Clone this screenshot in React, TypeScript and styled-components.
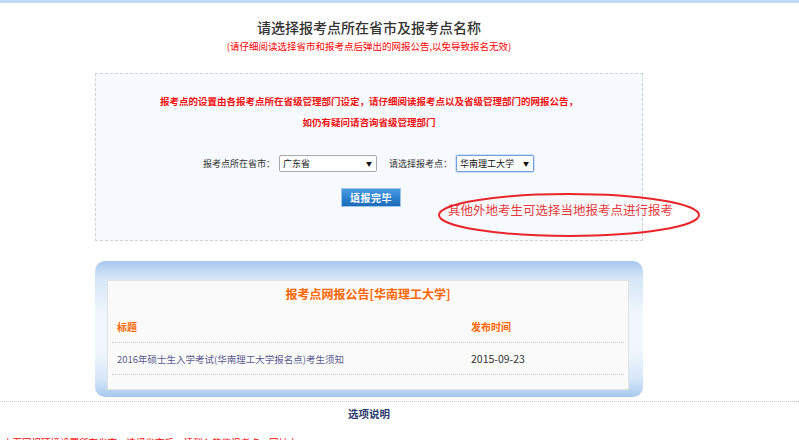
import styled, { createGlobalStyle } from "styled-components";

const GlobalStyle = createGlobalStyle`
  html, body {
    margin: 0;
    padding: 0;
    background: #fff;
    font-family: "Noto Sans CJK SC", "Liberation Sans", sans-serif;
    overflow: hidden;
  }
`;

const TopStrip = styled.div`
  height: 3px;
  background: #c3dbf3;
`;

const Column = styled.div`
  width: 548px;
  margin-left: 95px;
`;

const PageTitle = styled.h1`
  margin: 14px 0 0;
  font-size: 14px;
  line-height: 20px;
  font-weight: 500;
  color: #333;
  text-align: center;
`;

const SubNote = styled.p`
  margin: 2px 0 0;
  font-size: 9.5px;
  line-height: 14px;
  color: #f00;
  text-align: center;
`;

const ChoiceBox = styled.div`
  position: relative;
  margin-top: 20px;
  height: 168px;
  border: 1px dashed #cfd3d8;
  background: #f6f9fd;
  padding-top: 17px;
  box-sizing: border-box;
`;

const WarnText = styled.p`
  margin: 0;
  font-size: 9.5px;
  line-height: 21px;
  font-weight: 600;
  color: #f01010;
  text-align: center;
`;

const PickRow = styled.div`
  display: flex;
  align-items: center;
  gap: 4px;
  margin-top: 22px;
  padding-left: 107px;
  font-size: 9px;
  color: #333;
`;

const PickLabel = styled.span<{ $gap?: number }>`
  margin-left: ${(p) => p.$gap ?? 0}px;
`;

const SelectBox = styled.div<{ $w: number; $active?: boolean }>`
  position: relative;
  width: ${(p) => p.$w}px;
  height: 17px;
  box-sizing: border-box;
  border: 1px solid ${(p) => (p.$active ? "#6f9fe0" : "#a9a9a9")};
  border-radius: 2px;
  background: #fff;
  font-size: 9px;
  line-height: 15px;
  color: #111;
  padding-left: 3px;
  box-shadow: ${(p) => (p.$active ? "0 0 0 1px #cfe0f7" : "none")};
`;

const Arrow = styled.span`
  position: absolute;
  right: 4px;
  top: 0;
  font-size: 6px;
  line-height: 15px;
  color: #111;
`;

const SubmitButton = styled.button`
  display: block;
  margin: 16px 0 0 245px;
  width: 60px;
  height: 19px;
  padding: 0;
  border: 1px solid #9cc8ee;
  background: linear-gradient(to bottom, #4a9be0 0%, #2a7fcd 55%, #1d6bb8 100%);
  color: #fff;
  font-family: inherit;
  font-size: 10px;
  font-weight: 700;
  letter-spacing: 0.5px;
`;

const Remark = styled.div`
  position: absolute;
  left: 342px;
  top: 118px;
  width: 264px;
  height: 46px;
  display: flex;
  align-items: center;
  font-size: 12.5px;
  color: #e83a3a;
  padding-left: 10px;
  padding-bottom: 11px;
  box-sizing: border-box;
`;

const RemarkRing = styled.svg`
  position: absolute;
  inset: 0;
  overflow: visible;
`;

const NoticePanel = styled.div`
  margin-top: 20px;
  height: 136px;
  border-radius: 10px;
  box-sizing: border-box;
  padding: 19px 14px 7px 12px;
  background: linear-gradient(
    to bottom,
    #a6c8ee 0%,
    #d4e6f8 12%,
    #f2f7fd 40%,
    #f2f7fd 65%,
    #d4e6f8 88%,
    #a6c8ee 100%
  );
`;

const NoticeInner = styled.div`
  height: 100%;
  box-sizing: border-box;
  background: #fafafa;
  border: 1px solid #e2e2e2;
  padding: 3px 4px 0;
`;

const NoticeHead = styled.div`
  text-align: center;
  font-size: 12px;
  line-height: 20px;
  font-weight: 700;
  color: #f60;
`;

const NoticeRow = styled.div<{ $head?: boolean }>`
  display: grid;
  grid-template-columns: 354px 1fr;
  align-items: center;
  height: 31px;
  padding-left: 5px;
  border-bottom: 1px dotted #c8c8c8;
  font-size: ${(p) => (p.$head ? "10px" : "9.5px")};
  font-weight: ${(p) => (p.$head ? 700 : 400)};
  color: ${(p) => (p.$head ? "#f60" : "#333")};
  padding-top: ${(p) => (p.$head ? "7px" : "0")};
`;

const NoticeLink = styled.span`
  color: #5b5b90;
`;

const NoticeDate = styled.span`
  font-size: 10.5px;
`;

const Divider = styled.div`
  margin-top: 4px;
  border-top: 1px dotted #c8c8c8;
`;

const OptionTitle = styled.div`
  width: 548px;
  margin-left: 95px;
  margin-top: 4px;
  text-align: center;
  font-size: 10.5px;
  line-height: 16px;
  font-weight: 700;
  color: #2d3a6e;
`;

const BottomNote = styled.div`
  margin-top: 13px;
  padding-left: 3px;
  font-size: 9.5px;
  line-height: 14px;
  color: #f00;
  white-space: nowrap;
`;

export default function App() {
  return (
    <>
      <GlobalStyle />
      <TopStrip />
      <Column>
        <PageTitle>请选择报考点所在省市及报考点名称</PageTitle>
        <SubNote>(请仔细阅读选择省市和报考点后弹出的网报公告,以免导致报名无效)</SubNote>
        <ChoiceBox>
          <WarnText>
            报考点的设置由各报考点所在省级管理部门设定，请仔细阅读报考点以及省级管理部门的网报公告，
          </WarnText>
          <WarnText>如仍有疑问请咨询省级管理部门</WarnText>
          <PickRow>
            <PickLabel>报考点所在省市：</PickLabel>
            <SelectBox $w={98}>
              广东省
              <Arrow>▼</Arrow>
            </SelectBox>
            <PickLabel $gap={8}>请选择报考点：</PickLabel>
            <SelectBox $w={78} $active>
              华南理工大学
              <Arrow>▼</Arrow>
            </SelectBox>
          </PickRow>
          <SubmitButton type="button">填报完毕</SubmitButton>
          <Remark>
            <RemarkRing viewBox="0 0 264 46" preserveAspectRatio="none">
              <ellipse cx="131" cy="23" rx="130" ry="21" fill="none" stroke="#e8262a" strokeWidth="2" />
            </RemarkRing>
            其他外地考生可选择当地报考点进行报考
          </Remark>
        </ChoiceBox>
        <NoticePanel>
          <NoticeInner>
            <NoticeHead>报考点网报公告[华南理工大学]</NoticeHead>
            <NoticeRow $head>
              <span>标题</span>
              <span>发布时间</span>
            </NoticeRow>
            <NoticeRow>
              <NoticeLink>2016年硕士生入学考试(华南理工大学报名点)考生须知</NoticeLink>
              <NoticeDate>2015-09-23</NoticeDate>
            </NoticeRow>
          </NoticeInner>
        </NoticePanel>
      </Column>
      <Divider />
      <OptionTitle>选项说明</OptionTitle>
      <BottomNote>本页网报环境设置所在省市，选择省市后，请到入籍信报考点，网址由</BottomNote>
    </>
  );
}
